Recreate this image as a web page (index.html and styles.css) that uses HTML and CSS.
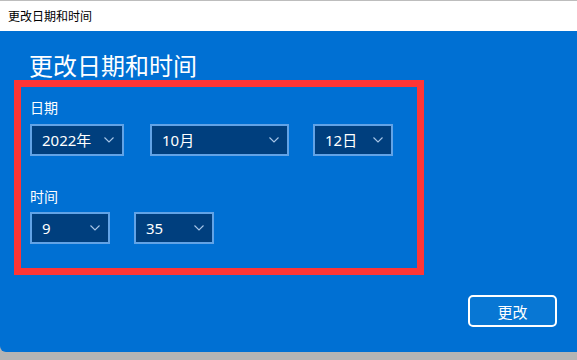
FILE: index.html
```html
<!DOCTYPE html>
<html lang="zh-CN">
<head>
<meta charset="utf-8">
<title>更改日期和时间</title>
<link rel="stylesheet" href="styles.css">
</head>
<body>
<div class="window">
  <div class="titlebar">更改日期和时间</div>
  <div class="dialog">
    <h1 class="heading">更改日期和时间</h1>
    <div class="highlight">
      <div class="label">日期</div>
      <div class="row">
        <div class="select w-year"><span>2022年</span><svg class="chev" viewBox="0 0 10 6" width="10" height="6"><polyline points="0.5,0.5 5,5 9.5,0.5"/></svg></div>
        <div class="select w-month"><span>10月</span><svg class="chev" viewBox="0 0 10 6" width="10" height="6"><polyline points="0.5,0.5 5,5 9.5,0.5"/></svg></div>
        <div class="select w-day"><span>12日</span><svg class="chev" viewBox="0 0 10 6" width="10" height="6"><polyline points="0.5,0.5 5,5 9.5,0.5"/></svg></div>
      </div>
      <div class="label label-time">时间</div>
      <div class="row row-time">
        <div class="select w-small"><span>9</span><svg class="chev" viewBox="0 0 10 6" width="10" height="6"><polyline points="0.5,0.5 5,5 9.5,0.5"/></svg></div>
        <div class="select w-small"><span>35</span><svg class="chev" viewBox="0 0 10 6" width="10" height="6"><polyline points="0.5,0.5 5,5 9.5,0.5"/></svg></div>
      </div>
    </div>
    <div class="actions">
      <button class="btn">更改</button>
    </div>
  </div>
  <div class="taskstrip"></div>
</div>
</body>
</html>
```

FILE: styles.css
```css
* { box-sizing: border-box; }
html, body {
  margin: 0;
  padding: 0;
  width: 577px;
  height: 360px;
  overflow: hidden;
  background: #b4b4b4;
  font-family: "Noto Sans", "Noto Sans CJK SC", sans-serif;
}
.window {
  display: flex;
  flex-direction: column;
  height: 360px;
}
.titlebar {
  height: 31px;
  border-top: 1px solid #bdbdbd;
  background: #ffffff;
  color: #000;
  font-family: "Noto Sans CJK SC", sans-serif;
  font-size: 12px;
  line-height: 30px;
  padding-left: 8px;
}
.dialog {
  height: 321px;
  background: #0070d3;
  color: #ffffff;
  padding: 18px 20px 0 14px;
  border-bottom-left-radius: 6px;
  display: flex;
  flex-direction: column;
}
.heading {
  margin: 0 0 0 15px;
  font-family: "Noto Sans CJK SC", sans-serif;
  font-weight: 400;
  font-size: 24px;
  line-height: 31px;
  height: 31px;
}
.highlight {
  width: 410px;
  height: 195px;
  border: 7px solid #ff3535;
  padding: 10px 0 0 9px;
}
.label {
  font-family: "Noto Sans CJK SC", sans-serif;
  font-size: 14px;
  line-height: 20px;
  height: 20px;
}
.label-time { margin-top: 30px; }
.row {
  display: flex;
  margin-top: 7px;
}
.row-time { margin-top: 6px; }
.select {
  height: 32px;
  border: 2px solid #62a3e6;
  background: #003f7e;
  display: flex;
  align-items: center;
  justify-content: space-between;
  padding: 0 8px 0 10px;
  font-size: 15px;
  color: #ffffff;
}
.select span { line-height: 28px; }
.select + .select { margin-left: 24px; }
.w-year { width: 94px; }
.w-year + .select { margin-left: 26px; }
.w-month { width: 139px; }
.w-day { width: 80px; }
.w-small { width: 80px; }
.chev {
  display: block;
  fill: none;
  stroke: #a9c7e8;
  stroke-width: 1.1;
}
.actions {
  display: flex;
  justify-content: flex-end;
  margin-top: 20px;
}
.btn {
  width: 89px;
  height: 32px;
  border: 2px solid #ffffff;
  border-radius: 5px;
  background: #0877d4;
  color: #ffffff;
  font-family: "Noto Sans CJK SC", sans-serif;
  font-size: 15px;
  padding: 0;
}
.taskstrip {
  flex: 1;
  background: #b4b4b4;
}
```
